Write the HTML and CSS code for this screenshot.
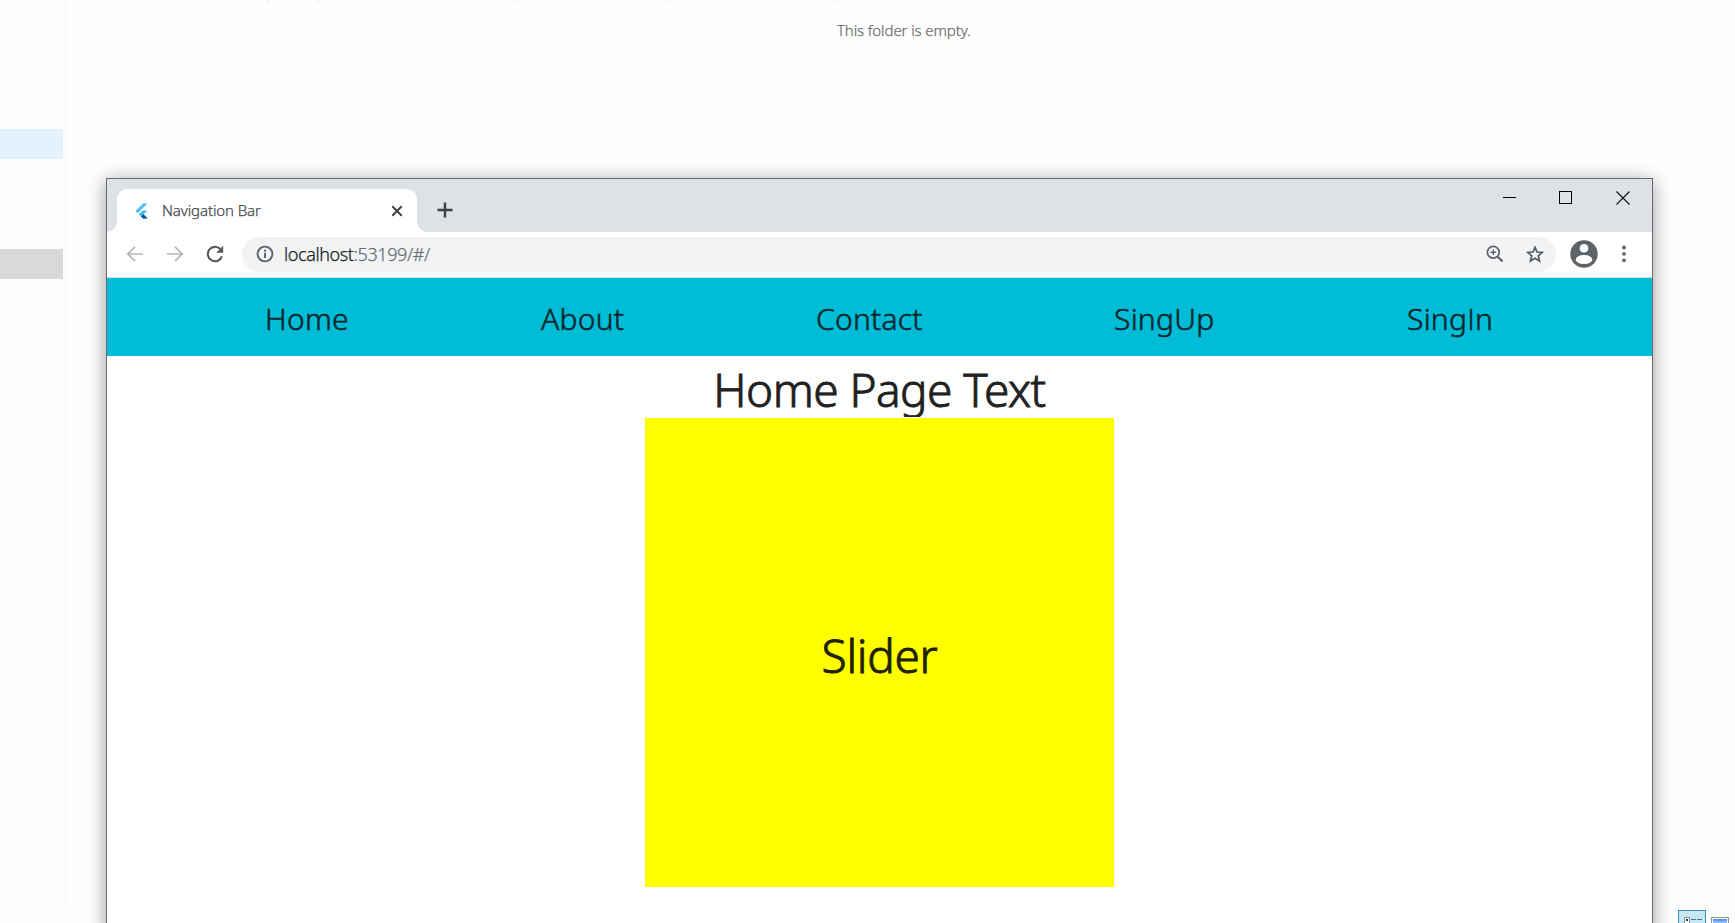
FILE: index.html
```
<!DOCTYPE html>
<html lang="en">
<head>
<meta charset="utf-8">
<title>Navigation Bar</title>
<link rel="stylesheet" href="styles.css">
</head>
<body>
<div class="explorer">
  <aside class="tree">
    <div class="tree-row hovered"></div>
    <div class="tree-row selected"></div>
  </aside>
  <section class="folder">
    <div class="header-edge"><i></i><i></i><i></i><i></i><i></i></div>
    <p class="empty">This folder is empty.</p>
  </section>
  <div class="views">
    <svg width="28" height="13" viewBox="0 0 28 13"><rect x=".5" y=".5" width="27" height="16" fill="#c5e9f4" stroke="#3c8fbb"/><rect x="6.500" y="7.500" width="5" height="8" fill="#fff" stroke="#8a9299"/><path d="M8 9h2v2H8z" fill="#333"/><path d="M13 9.500h5m1 0h5" stroke="#5b7078"/></svg>
    <svg width="18" height="6" viewBox="0 0 18 6"><rect x=".5" y=".5" width="17" height="10" fill="#fff" stroke="#8e929d"/><path d="M2 2h14v5H2z" fill="#8ebcf5"/><path d="M2 2h14v2H2z" fill="#5c98e6"/></svg>
  </div>
</div>

<div class="window">
  <header class="tabstrip">
    <div class="tab">
      <svg class="flutter" width="16" height="16" viewBox="0 0 16 16"><path d="M10 .500h4.500L4.700 10.200 2.500 8z" fill="#50bff3"/><path d="M10 7.400h4.500L10.800 11l3.700 4.500H10L5.700 11.200z" fill="#44b8ef"/><path d="M8 13.400l2.300-2.200 4.200 4.300H10z" fill="#0b4a91"/></svg>
      <span class="tab-title">Navigation Bar</span>
      <svg class="tab-close" width="12" height="12" viewBox="0 0 12 12"><path d="M1.300 1.300l9.400 9.400m0-9.400l-9.400 9.400" stroke="#3c4043" stroke-width="2"/></svg>
    </div>
    <svg class="new-tab" width="16" height="16" viewBox="0 0 16 16"><path d="M8 .500v15M.500 8h15" stroke="#3c4043" stroke-width="2.500"/></svg>
    <div class="controls">
      <svg width="13" height="13" viewBox="0 0 13 13"><path d="M0 6.500h13" stroke="#000"/></svg>
      <svg width="13" height="13" viewBox="0 0 13 13"><rect x=".5" y=".5" width="12" height="12" fill="none" stroke="#000"/></svg>
      <svg width="14" height="14" viewBox="0 0 14 14"><path d="M.500.500l13 13m0-13l-13 13" stroke="#111" stroke-width="1.100"/></svg>
    </div>
  </header>
  <div class="toolbar">
    <svg class="back" width="18" height="16" viewBox="0 0 18 16"><path d="M17 8H2M9 .800L1.800 8 9 15.200" fill="none" stroke="#b4b6b8" stroke-width="1.700"/></svg>
    <svg class="forward" width="18" height="16" viewBox="0 0 18 16"><path d="M1 8h15M9 .800L16.200 8 9 15.200" fill="none" stroke="#b4b6b8" stroke-width="1.700"/></svg>
    <svg class="reload" width="18" height="18" viewBox="0 0 18 18"><path d="M15.900 11.200A7.200 7.200 0 1 1 14.200 4" fill="none" stroke="#55595d" stroke-width="2.100"/><path d="M17.200.700v7h-7z" fill="#55595d"/></svg>
    <div class="omnibox">
      <svg class="info" width="18" height="18" viewBox="0 0 18 18"><circle cx="9" cy="9" r="7.400" fill="none" stroke="#5f6368" stroke-width="1.900"/><path d="M9 8v5M9 4.700v2" stroke="#5f6368" stroke-width="2"/></svg>
      <span class="url"><b>localhost</b>:53199/#/</span>
      <svg class="zoom-icon" width="18" height="18" viewBox="0 0 18 18"><circle cx="7.300" cy="7.300" r="5.900" fill="none" stroke="#5f6368" stroke-width="1.700"/><path d="M7.300 4.500v5.600M4.500 7.300h5.600" stroke="#5f6368" stroke-width="1.400"/><path d="M11.500 11.500l5 5" stroke="#5f6368" stroke-width="2.300"/></svg>
      <svg class="star" width="18" height="18" viewBox="0 0 18 18"><path d="M9 2.300l2 4.700 5.300.4-4 3.400 1.200 5.100L9 13.200l-4.500 2.700 1.200-5.100-4-3.400L7 7z" fill="none" stroke="#55595d" stroke-width="1.700"/></svg>
    </div>
    <svg class="avatar" width="28" height="28" viewBox="0 0 28 28"><circle cx="14" cy="14" r="13.700" fill="#5f6368"/><circle cx="14" cy="8.300" r="4.300" fill="#fff"/><ellipse cx="14" cy="19.500" rx="8.300" ry="4.500" fill="#fff"/></svg>
    <svg class="more" width="4" height="18" viewBox="0 0 4 18"><g fill="#5f6368"><circle cx="2" cy="2.500" r="1.900"/><circle cx="2" cy="8.900" r="1.900"/><circle cx="2" cy="15.300" r="1.900"/></g></svg>
  </div>
  <nav class="nav">
    <a class="home">Home</a><a class="about">About</a><a class="contact">Contact</a><a class="signup">SingUp</a><a class="signin">Sing<span class="plain-i">I</span>n</a>
  </nav>
  <main class="page">
    <h1 class="title">Home Page Text</h1>
    <div class="slider"><span>Slider</span></div>
  </main>
</div>
</body>
</html>
```
FILE: styles.css
```
* { box-sizing: border-box; }
body { margin: 0; width: 1735px; height: 923px; overflow: hidden; position: relative; background: #fff; font-family: "Noto Sans", "Open Sans", sans-serif; font-weight: 350; }
svg { display: block; flex: none; }

.explorer { display: flex; height: 923px; background: #fefefe; }
.tree { width: 66px; height: 905px; padding-top: 129px; border-right: 1px solid #f5f5f5; }
.tree-row { width: 63px; height: 30px; }
.hovered { background: #e3f2fd; margin-bottom: 90px; }
.selected { background: #d9d9d9; }
.folder { flex: 1; }
.header-edge { display: flex; height: 1px; padding-left: 267px; margin-left: -66px; }
.header-edge i { width: 2px; height: 1px; background: #e8e8e8; margin-right: 48px; }
.header-edge i:nth-child(2) { margin-right: 197px; }
.header-edge i:nth-child(3) { margin-right: 150px; }
.header-edge i:nth-child(4) { margin-right: 166px; }
.empty { margin: 18px 0 0 771px; font-size: 15px; line-height: 22px; color: #6d6d6d; white-space: nowrap; letter-spacing: -.1px; -webkit-text-stroke: .25px currentColor; }
.views { position: absolute; right: 6px; bottom: 0; display: flex; gap: 5px; align-items: flex-end; }

.window { position: absolute; left: 106px; top: 178px; width: 1547px; height: 760px; border: 1px solid #686a6d; background: #fff; box-shadow: 0 3px 18px rgba(0,0,0,.4); }
.tabstrip { height: 53px; display: flex; align-items: flex-start; background: #dee1e6; padding: 10px 22px 0 10px; }
.tab { position: relative; width: 300px; height: 43px; background: #fff; border-radius: 10px 10px 0 0; display: flex; align-items: center; padding: 0 14px 0 16px; }
.tab::before, .tab::after { content: ""; position: absolute; bottom: 0; width: 10px; height: 10px; }
.tab::before { left: -10px; background: radial-gradient(circle at 0 0, transparent 9.5px, #fff 10px); }
.tab::after { right: -10px; background: radial-gradient(circle at 100% 0, transparent 9.5px, #fff 10px); }
.tab-title { margin: 0 0 2px 13px; flex: 1; font-size: 15px; line-height: 20px; color: #45494d; letter-spacing: -.1px; white-space: nowrap; -webkit-text-stroke: .25px currentColor; }
.new-tab { margin: 13px 0 0 20px; }
.controls { margin-left: auto; display: flex; gap: 44px; }
.controls svg { margin-top: 2px; }
.controls svg:first-child { margin-right: -1px; }
.toolbar { height: 46px; display: flex; align-items: center; padding: 0 26px 0 19px; border-bottom: 1px solid #d8dfe1; }
.toolbar svg { margin-bottom: 1px; }
.forward { margin-left: 22px; }
.reload { margin-left: 22px; }
.omnibox { margin-left: 18px; width: 1314px; height: 35px; border-radius: 18px; background: #f1f3f4; display: flex; align-items: center; padding: 0 12px 0 14px; }
.url { margin: 0 0 2px 10px; flex: 1; font-size: 18px; line-height: 24px; color: #6b6f73; letter-spacing: -.4px; white-space: nowrap; -webkit-text-stroke: .25px currentColor; }
.url b { font-weight: inherit; color: #202124; }
.star { margin-left: 22px; }
.avatar { margin-left: 14px; }
.more { margin-left: 24px; }

.nav { height: 78px; background: #00bcd7; display: flex; gap: 192px; padding: 20px 0 0 158px; color: #08272d; font-size: 30px; line-height: 42px; letter-spacing: .25px; -webkit-text-stroke: .55px currentColor; }
.nav a { flex: none; white-space: nowrap; }
.home { width: 84px; }
.about { width: 83px; }
.contact { width: 106px; }
.signup { width: 101px; }
.signin { width: 86px; }
.plain-i { font-family: "Open Sans", sans-serif; }
.page { display: flex; flex-direction: column; align-items: center; }
.title { margin: 0; height: 61px; overflow: hidden; font-weight: inherit; font-size: 46px; line-height: 67px; color: #212121; white-space: nowrap; letter-spacing: -.55px; -webkit-text-stroke: .9px currentColor; }
.slider { width: 469px; height: 469px; margin-top: 1px; background: #ff0; display: flex; align-items: center; justify-content: center; padding-top: 4px; font-size: 46px; line-height: 60px; color: #212100; letter-spacing: -.3px; -webkit-text-stroke: .9px currentColor; }
```
